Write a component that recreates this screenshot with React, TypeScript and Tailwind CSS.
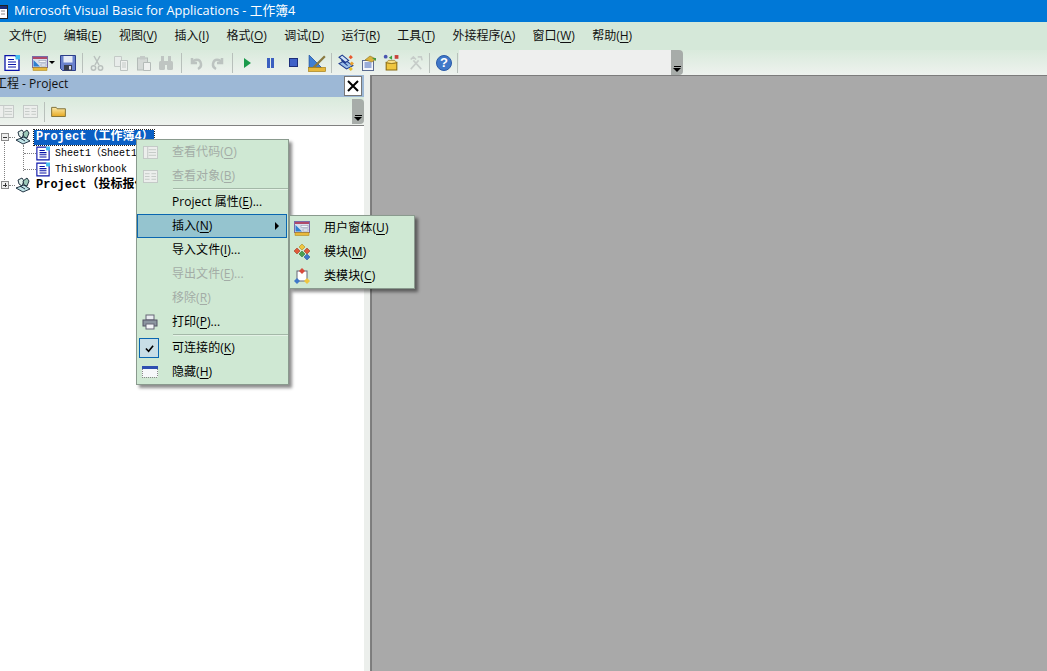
const cjk = "font-['Open_Sans','Noto_Sans_CJK_SC',sans-serif]";
const mono = "font-['Liberation_Mono','Noto_Sans_CJK_SC',monospace]";

const menus: [string, string][] = [
  ['文件', 'F'], ['编辑', 'E'], ['视图', 'V'], ['插入', 'I'], ['格式', 'O'], ['调试', 'D'],
  ['运行', 'R'], ['工具', 'T'], ['外接程序', 'A'], ['窗口', 'W'], ['帮助', 'H'],
];

function Key({ label, k, tail }: { label: string; k: string; tail?: string }) {
  return (
    <span className="whitespace-nowrap">
      {label}(<span className="underline underline-offset-2">{k}</span>){tail}
    </span>
  );
}

function DocIcon({ className = 'w-4 h-4' }: { className?: string }) {
  return (
    <svg viewBox="0 0 16 16" className={className}>
      <path d="M1 .7h10.500L15 4v11.300H1z" fill="#fff" stroke="#0a14a8" strokeWidth="1.300" />
      <path d="M11.500 0H16v4.500h-4.500z" fill="#45bdf0" />
      <path d="M4 4.500h6M4 7h8M4 9.500h8M4 12h8" stroke="#0a14a8" strokeWidth="1.200" />
    </svg>
  );
}

function FormIcon({ className = 'w-4 h-4' }: { className?: string }) {
  return (
    <svg viewBox="0 0 16 16" className={className}>
      <rect x=".5" y="1.500" width="15" height="11" fill="#d5deec" stroke="#7a6aa8" />
      <rect x="1" y="2" width="14" height="2" fill="#b04a6a" />
      <path d="M1.500 5L8 11.500H1.500z" fill="#2f7fd0" />
      <rect x="7" y="5.500" width="7" height="2" fill="#f4f6fa" stroke="#8a8fa8" strokeWidth=".5" />
      <rect x="9" y="9" width="5" height="2" fill="#f4f6fa" stroke="#8a8fa8" strokeWidth=".5" />
      <rect x="1" y="12.500" width="14" height="3" fill="#e8b93c" stroke="#a67c10" strokeWidth=".5" />
    </svg>
  );
}

function SaveIcon() {
  return (
    <svg viewBox="0 0 16 16" className="w-4 h-4">
      <path d="M.5 .5h15v15h-13l-2-2z" fill="#6a82cc" stroke="#2d3f8a" />
      <rect x="3.500" y="1" width="9" height="6.500" fill="#e6ebf6" />
      <rect x="4" y="10" width="8" height="5.500" fill="#3a3f4c" />
      <rect x="9" y="11" width="2" height="3.500" fill="#dde" />
    </svg>
  );
}

function FadedCut() {
  return (
    <svg viewBox="0 0 16 16" className="w-4 h-4" fill="none" stroke="#b9c0bd" strokeWidth="1.500">
      <path d="M5 1l5 9M11 1L6 10" />
      <circle cx="4.500" cy="13" r="2.200" />
      <circle cx="11.500" cy="13" r="2.200" />
    </svg>
  );
}

function FadedCopy() {
  return (
    <svg viewBox="0 0 16 16" className="w-4 h-4">
      <path d="M1.500 1.500h7v10h-7z" fill="#e8ecea" stroke="#c4cac7" />
      <path d="M7.500 5.500h7v10h-7z" fill="#eef0ee" stroke="#bcc3c0" />
      <path d="M9 8h4M9 10h4M9 12h4" stroke="#c4cac7" />
    </svg>
  );
}

function FadedPaste() {
  return (
    <svg viewBox="0 0 16 16" className="w-4 h-4">
      <rect x="1.500" y="3" width="10" height="12" fill="#d4d9d6" stroke="#b4bbb8" />
      <rect x="4" y="1" width="5" height="3.500" fill="#c4cac7" />
      <path d="M7.500 7.500h7v8h-7z" fill="#eef0ee" stroke="#b4bbb8" />
    </svg>
  );
}

function FadedFind() {
  return (
    <svg viewBox="0 0 16 16" className="w-4 h-4" fill="#bfc5c2">
      <rect x="1" y="6" width="6" height="9" rx="1.500" />
      <rect x="9" y="6" width="6" height="9" rx="1.500" />
      <rect x="3" y="1" width="3" height="6" />
      <rect x="10" y="1" width="3" height="6" />
      <rect x="6" y="6" width="4" height="4" />
    </svg>
  );
}

function FadedArrow({ flip }: { flip?: boolean }) {
  return (
    <svg viewBox="0 0 16 16" className={flip ? 'w-4 h-4 -scale-x-100' : 'w-4 h-4'} fill="none" stroke="#bcc3c0" strokeWidth="2.500">
      <path d="M4 3v5h5" />
      <path d="M4 8c2-4 8-5 9 1 .3 2-1 4-3 5" />
    </svg>
  );
}

function DesignIcon() {
  return (
    <svg viewBox="0 0 16 16" className="w-[18px] h-[18px]">
      <path d="M1 1l11 11H1z" fill="#3f7fd4" stroke="#1d4fa0" strokeWidth=".7" />
      <path d="M5 12L15 2" stroke="#8a7a40" strokeWidth="2" />
      <rect x=".5" y="12" width="15" height="3.500" fill="#e8b93c" stroke="#a67c10" strokeWidth=".6" />
    </svg>
  );
}

function ExplorerIcon() {
  return (
    <svg viewBox="0 0 16 16" className="w-[17px] h-[17px]">
      <path d="M1 9l7 5 6-3-7-5z" fill="#9cc0e8" stroke="#1e3a8e" />
      <path d="M1 3l3-2 6 5-3 2zM3 6l6 5" fill="#cfe2f6" stroke="#1e3a8e" />
      <path d="M12 1l2 2-2 2-2-2z" fill="#e85a30" />
      <path d="M13 7l2 2-2 2-2-2z" fill="#e8a030" />
      <path d="M12 12l2 2-2 2-2-2z" fill="#e8c030" />
    </svg>
  );
}

function TreeProjectIcon() {
  return (
    <svg viewBox="0 0 16 16" className="w-4 h-4 shrink-0">
      <path d="M1 11l7 4 7-3-6-4z" fill="#bfe3e6" stroke="#123" strokeWidth=".9" />
      <path d="M3 3l4-2 2 3-2 5-3-2z" fill="#dff0ea" stroke="#123" strokeWidth=".9" />
      <path d="M8 4l4-3 2 3-2 5-3-1z" fill="#9bc8b8" stroke="#123" strokeWidth=".9" />
      <path d="M5 9l5 3" stroke="#123" strokeWidth=".9" />
    </svg>
  );
}

function PropsIcon() {
  return (
    <svg viewBox="0 0 16 16" className="w-4 h-4">
      <rect x="1.500" y="5.500" width="11" height="10" fill="#f4f6fa" stroke="#5a6a90" />
      <path d="M3.500 8h7M3.500 10h7M3.500 12h7" stroke="#3f62b8" />
      <path d="M4 5l5-4 6 3-4 3z" fill="#d9b23c" stroke="#8a7020" strokeWidth=".6" />
      <path d="M11 3l4 0 0 3z" fill="#4a9a40" />
    </svg>
  );
}

function ObjectIcon() {
  return (
    <svg viewBox="0 0 16 16" className="w-[17px] h-[17px]">
      <path d="M3 8l5 1 5-1v7H3z" fill="#efc640" stroke="#8a6a10" />
      <path d="M3 8l2-2h6l2 2-5 1z" fill="#f8e088" stroke="#8a6a10" strokeWidth=".6" />
      <circle cx="2.500" cy="2.500" r="1.800" fill="#4a55b0" />
      <path d="M5.500 3.500l3-2v4z" fill="#3fa040" />
      <rect x="11" y="1" width="3.500" height="3.500" fill="#c8403a" />
    </svg>
  );
}

function Tools() {
  return (
    <svg viewBox="0 0 16 16" className="w-[14px] h-[14px]" fill="none" stroke="#c6ccc9" strokeWidth="1.800">
      <path d="M2 15L11 5M14 15L5 5" />
      <path d="M2 4l3-3 3 3M10 1l4 0 1 4" />
    </svg>
  );
}

function HelpIcon() {
  return (
    <span className="w-4 h-4 rounded-full bg-[#3f78c8] border border-[#2a5aa8] text-white text-[13px] leading-4 font-bold flex items-center justify-center font-['Liberation_Sans',sans-serif]">
      ?
    </span>
  );
}

function Grip() {
  return (
    <div className="w-3 h-[25px] bg-[#a7aca9] rounded-r-sm flex flex-col items-center justify-end pb-[3px] gap-[1px] shrink-0">
      <div className="w-[7px] h-px bg-black" />
      <div className="w-0 h-0 border-x-[4px] border-x-transparent border-t-[4px] border-t-black" />
    </div>
  );
}

function Sep() {
  return <div className="w-px h-[20px] bg-[#b8c0bb]" />;
}

function Tool({ w, children }: { w: number; children: React.ReactNode }) {
  return (
    <div className="flex items-center justify-center h-full" style={{ width: w }}>
      {children}
    </div>
  );
}

function FadedGrid({ variant }: { variant: number }) {
  return (
    <svg viewBox="0 0 16 14" className="w-[15px] h-[13px]">
      <rect x=".5" y=".5" width="15" height="13" fill="#eceeec" stroke="#c2c8c5" />
      <path d={variant === 1 ? 'M5 1v12M6 4h8M6 7h8M6 10h8' : 'M2 4h5M2 7h5M2 10h5M9 4h5M9 7h5M9 10h5'} stroke="#c2c8c5" />
    </svg>
  );
}

function Row({ icon, disabled, active, children }: { icon?: React.ReactNode; disabled?: boolean; active?: boolean; children: React.ReactNode }) {
  return (
    <div
      className={
        'h-6 flex items-center relative ' +
        (disabled ? 'text-[#a3aca6] ' : 'text-black ') +
        (active ? 'bg-[#95c4cf] mr-px outline outline-1 -outline-offset-1 outline-[#0a66b0]' : '')
      }
    >
      <div className="w-[26px] flex items-center justify-center shrink-0">{icon}</div>
      <div className="pl-[9px]">{children}</div>
    </div>
  );
}

function MenuSep() {
  return (
    <div className="h-[2px] ml-[36px] flex flex-col">
      <div className="h-px bg-[#a4b8a8]" />
      <div className="h-px bg-[#e4f2e6]" />
    </div>
  );
}

function ExpandBox({ open }: { open: boolean }) {
  return (
    <div className="w-[8px] h-[8px] ml-[1px] border border-[#8a8a8a] bg-[#eee] relative shrink-0 flex items-center justify-center">
      <div className="w-[4px] h-px bg-[#333]" />
      {!open && <div className="absolute w-px h-[4px] bg-[#333]" />}
    </div>
  );
}

function ProjectLine({ open, selected, children }: { open: boolean; selected?: boolean; children: React.ReactNode }) {
  return (
    <div className={'h-4 flex items-center whitespace-nowrap text-[12px] font-bold ' + mono}>
      <ExpandBox open={open} />
      <div className="w-[6px] border-t border-dotted border-[#808080] shrink-0" />
      <TreeProjectIcon />
      <span className={'ml-[3px] pl-[2px] leading-[15px] ' + (selected ? 'bg-[#0a5fc4] text-white outline-1 outline-dotted outline-[#222]' : '')}>
        {children}
      </span>
    </div>
  );
}

function FileLine({ children }: { children: React.ReactNode }) {
  return (
    <div className="flex items-center h-4 whitespace-nowrap">
      <div className="w-[12px] ml-[24px] border-t border-dotted border-[#808080] shrink-0" />
      <DocIcon className="w-[14px] h-[15px] shrink-0" />
      <span className={'ml-[5px] text-[10px] ' + mono}>{children}</span>
    </div>
  );
}

export default function App() {
  return (
    <div className={'w-[1047px] h-[671px] overflow-hidden bg-white flex flex-col relative text-black ' + cjk}>
      {/* title */}
      <div className="h-[22px] bg-[#0078d7] flex items-center shrink-0 text-white text-[12.75px] overflow-hidden">
        <svg viewBox="0 0 16 16" className="w-4 h-4 -ml-2 mr-[6px] shrink-0">
          <rect x=".5" y="2.500" width="15" height="13" fill="#fff" stroke="#222" />
          <rect x="1" y="3" width="14" height="3" fill="#1d2f7a" />
          <path d="M9 8h4M9 11h4" stroke="#888" />
        </svg>
        <span className="whitespace-nowrap">Microsoft Visual Basic for Applications - 工作簿4</span>
      </div>

      {/* menu bar */}
      <div className="h-[28px] bg-[#d5e8d9] flex items-center shrink-0 pl-[9px] gap-[17.4px] text-[12px] text-[#111]">
        {menus.map(([label, k]) => (
          <Key key={k} label={label} k={k} />
        ))}
      </div>

      {/* toolbar */}
      <div className="h-[25px] bg-gradient-to-b from-[#d9eadc] to-[#eef2ee] flex items-center shrink-0 pl-[4px]">
        <Tool w={16}><DocIcon /></Tool>
        <div className="w-[12px]" />
        <Tool w={16}><FormIcon /></Tool>
        <div className="w-[6px] flex justify-center ml-[1px]">
          <div className="w-0 h-0 border-x-[3px] border-x-transparent border-t-[3px] border-t-black" />
        </div>
        <div className="w-[5px]" />
        <Tool w={16}><SaveIcon /></Tool>
        <div className="w-[6px]" />
        <Sep />
        <div className="w-[6px]" />
        <Tool w={16}><FadedCut /></Tool>
        <div className="w-[8px]" />
        <Tool w={16}><FadedCopy /></Tool>
        <div className="w-[7px]" />
        <Tool w={16}><FadedPaste /></Tool>
        <div className="w-[6px]" />
        <Tool w={16}><FadedFind /></Tool>
        <div className="w-[7px]" />
        <Sep />
        <div className="w-[6px]" />
        <Tool w={16}><FadedArrow /></Tool>
        <div className="w-[6px]" />
        <Tool w={16}><FadedArrow flip /></Tool>
        <div className="w-[6px]" />
        <Sep />
        <div className="w-[8px]" />
        <Tool w={12}>
          <div className="w-0 h-0 border-y-[5px] border-y-transparent border-l-[7px] border-l-[#1a9a4a]" />
        </Tool>
        <div className="w-[11px]" />
        <Tool w={12}>
          <div className="flex gap-[1px]">
            <div className="w-[3px] h-[10px] bg-[#3b5fc0]" />
            <div className="w-[3px] h-[10px] bg-[#3b5fc0]" />
          </div>
        </Tool>
        <div className="w-[11px]" />
        <Tool w={12}><div className="w-[9px] h-[9px] bg-[#3f62c8] border border-[#1d2f7a]" /></Tool>
        <div className="w-[9px]" />
        <Tool w={18}><DesignIcon /></Tool>
        <div className="w-[5px]" />
        <Sep />
        <div className="w-[6px]" />
        <Tool w={17}><ExplorerIcon /></Tool>
        <div className="w-[6px]" />
        <Tool w={16}><PropsIcon /></Tool>
        <div className="w-[6px]" />
        <Tool w={17}><ObjectIcon /></Tool>
        <div className="w-[8px]" />
        <Tool w={16}><Tools /></Tool>
        <div className="w-[5px]" />
        <Sep />
        <div className="w-[6px]" />
        <Tool w={16}><HelpIcon /></Tool>
        <div className="w-[5px]" />
        <Sep />
        <div className="w-[1px]" />
        <div className="w-[212px] h-full bg-[#eeefee]" />
        <Grip />
      </div>

      {/* body */}
      <div className="flex-1 min-h-0 flex">
        <div className="w-[364px] flex flex-col bg-white shrink-0">
          <div className="h-[22px] bg-[#9db8d6] flex items-center justify-between pr-[2px] shrink-0 overflow-hidden text-[12px] text-[#111]">
            <span className="-ml-[5px] pb-[5px] whitespace-nowrap">工程 - Project</span>
            <div className="w-[18px] h-[20px] bg-white border border-[#777] flex items-center justify-center">
              <svg viewBox="0 0 12 12" className="w-3 h-3" stroke="#000" strokeWidth="2">
                <path d="M1 1l10 10M11 1L1 11" />
              </svg>
            </div>
          </div>
          <div className="h-[29px] pt-[1px] bg-gradient-to-b from-[#d9eadc] to-[#eef2ee] flex items-center shrink-0 border-b border-[#808080]">
            <div className="-ml-px flex items-center flex-1 h-full">
              <FadedGrid variant={1} />
              <div className="w-[9px]" />
              <FadedGrid variant={2} />
              <div className="w-[6px]" />
              <Sep />
              <div className="w-[6px]" />
              <svg viewBox="0 0 16 12" className="w-[15px] h-[11px]">
                <defs>
                  <linearGradient id="folder" x1="0" y1="0" x2="0" y2="1">
                    <stop offset="0" stopColor="#fbe9a8" />
                    <stop offset="1" stopColor="#e6a820" />
                  </linearGradient>
                </defs>
                <path d="M.5 1.500h5l1 1.500h9v8.500H.5z" fill="url(#folder)" stroke="#7a6a30" />
              </svg>
            </div>
            <Grip />
          </div>
          <div className="pt-[3px] flex-1 relative">
            <div className="absolute left-[4px] top-[16px] h-[38px] border-l border-dotted border-[#808080]" />
            <div className="absolute left-[23px] top-[19px] h-[26px] border-l border-dotted border-[#808080]" />
            <ProjectLine open selected>Project（工作簿4）</ProjectLine>
            <FileLine>Sheet1（Sheet1）</FileLine>
            <FileLine>ThisWorkbook</FileLine>
            <ProjectLine open={false}>Project（投标报价）</ProjectLine>
          </div>
        </div>
        <div className="w-[7px] bg-[#ecefec] shrink-0 border-r border-[#808080]" />
        <div className="flex-1 bg-[#a9a9a9] border-l border-t border-[#7c7c7c]" />
      </div>

      {/* context menu */}
      <div className="absolute left-[136px] top-[139px] w-[153px] bg-[#cfe8d3] border border-[#8a9a8e] shadow-[3px_3px_3px_rgba(0,0,0,0.45)] text-[12px] tracking-[0.05px]">
        <Row disabled icon={<FadedGrid variant={1} />}><Key label="查看代码" k="O" /></Row>
        <Row disabled icon={<FadedGrid variant={2} />}><Key label="查看对象" k="B" /></Row>
        <MenuSep />
        <Row><Key label="Project 属性" k="E" tail="..." /></Row>
        <Row active>
          <Key label="插入" k="N" />
          <div className="absolute right-[8px] top-[8px] w-0 h-0 border-y-[4px] border-y-transparent border-l-[4px] border-l-black" />
        </Row>
        <Row><Key label="导入文件" k="I" tail="..." /></Row>
        <Row disabled><Key label="导出文件" k="E" tail="..." /></Row>
        <Row disabled><Key label="移除" k="R" /></Row>
        <Row
          icon={
            <svg viewBox="0 0 16 16" className="w-4 h-4">
              <rect x="4" y="1" width="8" height="5" fill="#e8ecf0" stroke="#667" />
              <rect x="1" y="6" width="14" height="6" fill="#8c96a0" stroke="#556" />
              <rect x="4" y="10" width="8" height="5" fill="#f4f6f8" stroke="#667" />
            </svg>
          }
        >
          <Key label="打印" k="P" tail="..." />
        </Row>
        <MenuSep />
        <Row
          icon={
            <div className="w-[20px] h-[20px] -ml-[2px] bg-[#c8dee6] border border-[#0a66b0] flex items-center justify-center">
              <svg viewBox="0 0 10 10" className="w-[9px] h-[9px]" fill="none" stroke="#000" strokeWidth="1.800">
                <path d="M1 5l3 3 5-6" />
              </svg>
            </div>
          }
        >
          <Key label="可连接的" k="K" />
        </Row>
        <Row
          icon={
            <svg viewBox="0 0 16 14" className="w-4 h-[14px]">
              <rect x="0" y="1" width="16" height="3" fill="#2f4fb0" />
              <rect x="0" y="4" width="16" height="8" fill="#f6f8fa" />
              <path d="M0 12.500h16M.5 4v8M15.500 4v8" stroke="#888" strokeDasharray="1 1" />
            </svg>
          }
        >
          <Key label="隐藏" k="H" />
        </Row>
      </div>

      {/* submenu */}
      <div className="absolute left-[289px] top-[215px] w-[126px] bg-[#cfe8d3] border border-[#8a9a8e] shadow-[3px_3px_3px_rgba(0,0,0,0.45)] text-[12px] tracking-[0.1px]">
        <div className="h-6 flex items-center">
          <div className="w-[26px] pl-[4px] shrink-0"><FormIcon /></div>
          <div className="pl-[8px]"><Key label="用户窗体" k="U" /></div>
        </div>
        <div className="h-6 flex items-center">
          <div className="w-[26px] pl-[4px] shrink-0">
            <svg viewBox="0 0 16 16" className="w-4 h-4">
              <path d="M8 0l3 3-3 3-3-3z" fill="#efc640" stroke="#a07a10" strokeWidth=".5" />
              <path d="M3 4l3 3-3 3-3-3z" fill="#e05a3a" stroke="#902a10" strokeWidth=".5" />
              <path d="M13 4l3 3-3 3-3-3z" fill="#e05a3a" stroke="#902a10" strokeWidth=".5" />
              <path d="M8 7l3 3-3 3-3-3z" fill="#4aa050" stroke="#206a28" strokeWidth=".5" />
              <path d="M13 10l3 3-3 3-3-3z" fill="#3f78c8" stroke="#204a90" strokeWidth=".5" />
            </svg>
          </div>
          <div className="pl-[8px]"><Key label="模块" k="M" /></div>
        </div>
        <div className="h-6 flex items-center">
          <div className="w-[26px] pl-[4px] shrink-0">
            <svg viewBox="0 0 16 16" className="w-4 h-4">
              <rect x="3" y="3" width="10" height="10" fill="#fff" stroke="#667" />
              <path d="M8 0l3 3-3 3-3-3z" fill="#d84a3a" />
              <path d="M3 10l3 3-3 3-3-3z" fill="#3f78c8" />
              <path d="M13 10l3 3-3 3-3-3z" fill="#efc640" />
            </svg>
          </div>
          <div className="pl-[8px]"><Key label="类模块" k="C" /></div>
        </div>
      </div>
    </div>
  );
}
